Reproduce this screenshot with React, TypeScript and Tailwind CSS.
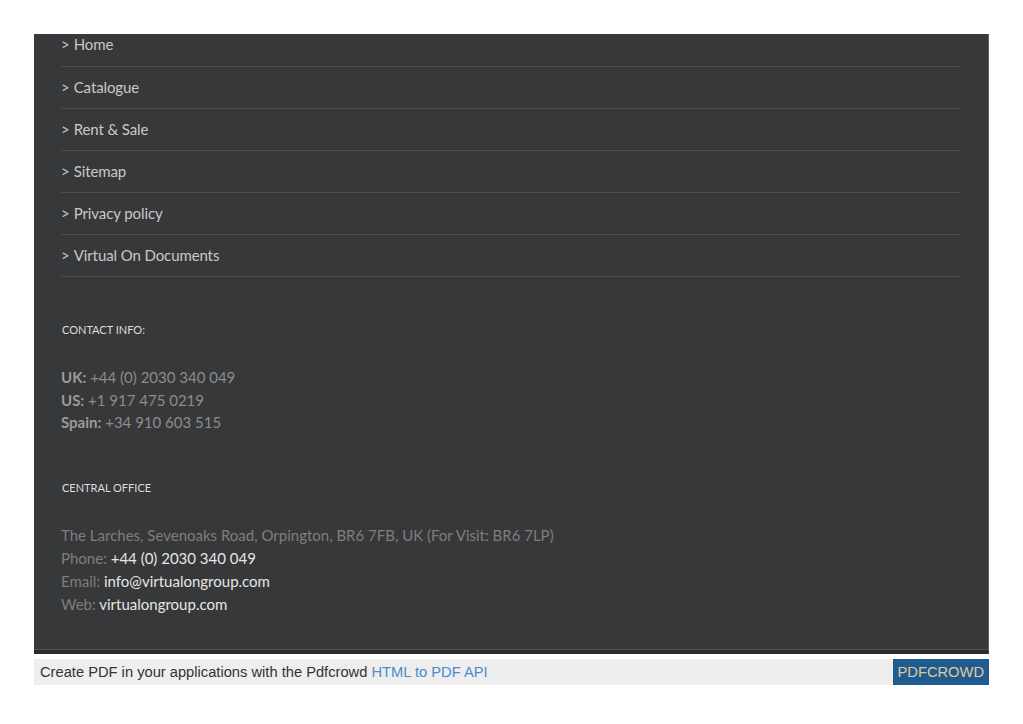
import React from "react";

const links = ["Home", "Catalogue", "Rent & Sale", "Sitemap", "Privacy policy", "Virtual On Documents"];

export default function App() {
  return (
    <div className="w-full h-[724px] bg-white px-[34px] pt-[34px] overflow-hidden">
      <div className="bg-[#37383a] border-r border-[#5e6162] border-b-4 border-b-[#2a2b2c]">
        <div className="border-b border-[#4f5052] px-[27px] h-[616px]" style={{ fontFamily: "Lato, 'Open Sans', sans-serif" }}>
          <ul>
            {links.map((l, i) => (
              <li
                key={l}
                className={`flex items-center border-b border-[#4c4d4f] text-[15px] leading-[21px] text-[#c8c8c8] ${i === 0 ? "pt-0 pb-[11px]" : "py-[10px]"}`}
              >
                <span className="mr-[4px] text-[15px]">&gt;</span>
                <span className="tracking-[-0.1px]">{l}</span>
              </li>
            ))}
          </ul>

          <div className="mt-[46px] text-[11px] leading-[14px] text-[#dcdcdc] uppercase pl-px">Contact Info:</div>
          <div className="mt-[29px] text-[15px] leading-[22.5px] text-[#8c8c8c]">
            <div><b className="font-bold text-[#9a9a9a]">UK:</b> +44 (0) 2030 340 049</div>
            <div><b className="font-bold text-[#9a9a9a]">US:</b> +1 917 475 0219</div>
            <div><b className="font-bold text-[#9a9a9a]">Spain:</b> +34 910 603 515</div>
          </div>

          <div className="mt-[47px] text-[11px] leading-[14px] text-[#dcdcdc] uppercase pl-px">Central Office</div>
          <div className="mt-[29px] text-[15px] leading-[23px] text-[#7e7e7e]">
            <div>The Larches, Sevenoaks Road, Orpington, BR6 7FB, UK (For Visit: BR6 7LP)</div>
            <div>Phone: <span className="text-[#e6e6e6]">+44 (0) 2030 340 049</span></div>
            <div>Email: <span className="text-[#e6e6e6]">info@virtualongroup.com</span></div>
            <div>Web: <span className="text-[#e6e6e6]">virtualongroup.com</span></div>
          </div>
        </div>
      </div>

      <div
        className="mt-[5px] h-[26px] bg-[#eeeeee] flex items-center justify-between"
        style={{ fontFamily: "'Liberation Sans', Arial, sans-serif" }}
      >
        <div className="pl-[6px] text-[14.7px] text-[#333333]">
          Create PDF in your applications with the Pdfcrowd <span className="text-[#4a8bc9]">HTML to PDF API</span>
        </div>
        <div className="h-[26px] px-[5px] bg-[#1e5b8f] text-[#e2c99a] text-[14.7px] flex items-center">PDFCROWD</div>
      </div>
    </div>
  );
}
